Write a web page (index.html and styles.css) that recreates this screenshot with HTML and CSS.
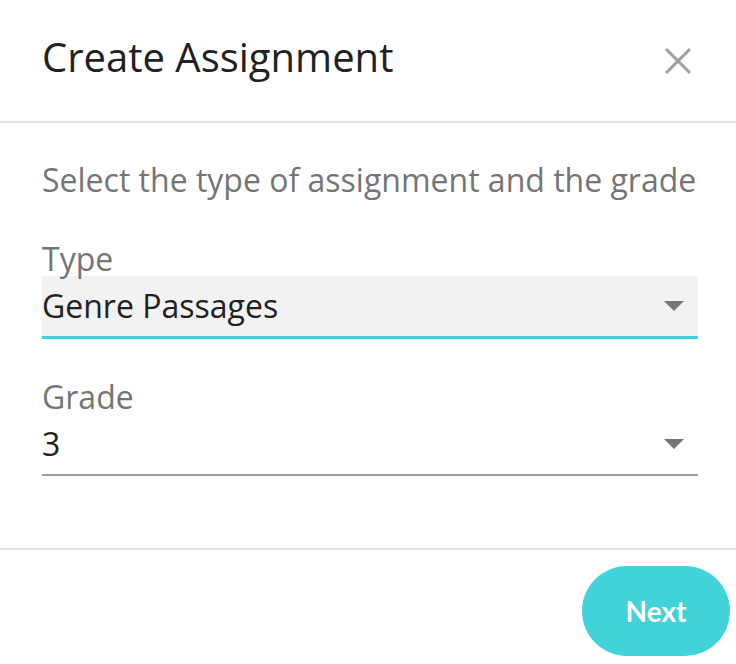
FILE: index.html
```html
<!DOCTYPE html>
<html lang="en">
<head>
    <meta charset="UTF-8">
    <meta name="viewport" content="width=device-width, initial-scale=1.0">
    <title>Create Assignment</title>
    <link rel="stylesheet" href="styles.css">
</head>
<body>

<div class="dialog">
    <div class="dialog-header">
        <h1>Create Assignment</h1>
        <button class="close-btn" aria-label="Close">
            <svg width="28" height="28" viewBox="0 0 28 28">
                <path d="M2 2 L26 26 M26 2 L2 26" stroke="#9e9e9e" stroke-width="3" fill="none"/>
            </svg>
        </button>
    </div>

    <div class="dialog-body">
        <p class="intro">Select the type of assignment and the grade</p>

        <!-- Type select -->
        <div class="field">
            <label class="field-label">Type</label>
            <div class="select-box active">
                <span class="select-value">Genre Passages</span>
                <span class="caret"></span>
            </div>
        </div>

        <!-- Grade select -->
        <div class="field">
            <label class="field-label">Grade</label>
            <div class="select-box">
                <span class="select-value">3</span>
                <span class="caret"></span>
            </div>
        </div>
    </div>

    <div class="dialog-footer">
        <button class="next-btn">Next</button>
    </div>
</div>

</body>
</html>
```

FILE: styles.css
```css
* {
    margin: 0;
    padding: 0;
    box-sizing: border-box;
}

body {
    font-family: 'Open Sans', sans-serif;
    background: #fff;
    width: 736px;
    height: 664px;
    overflow: hidden;
}

.dialog {
    display: flex;
    flex-direction: column;
    height: 664px;
}

.dialog-header {
    display: flex;
    justify-content: space-between;
    align-items: flex-start;
    height: 123px;
    padding: 37px 44px 0 42px;
    border-bottom: 2px solid #e0e0e0;
}

h1 {
    font-size: 40px;
    font-weight: 400;
    line-height: 40px;
    color: #212121;
}

.close-btn {
    background: none;
    border: none;
    margin-top: 10px;
    width: 28px;
    height: 28px;
    cursor: pointer;
}

.close-btn svg {
    display: block;
}

.dialog-body {
    flex: 1;
    padding: 37px 38px 0 42px;
}

.intro {
    font-size: 32px;
    line-height: 40px;
    color: #757575;
    margin-bottom: 42px;
}

.field {
    margin-bottom: 41px;
}

.field-label {
    display: block;
    font-size: 32px;
    line-height: 34px;
    color: #757575;
}

.select-box {
    display: flex;
    justify-content: space-between;
    align-items: center;
    height: 62px;
    padding: 0 14px 0 0;
    border-bottom: 2px solid #9e9e9e;
}

.select-box.active {
    background: #f2f2f2;
    height: 63px;
    border-bottom: 3px solid #41d3d9;
}

.select-value {
    font-size: 32px;
    line-height: 40px;
    color: #212121;
}

.caret {
    width: 0;
    height: 0;
    border-left: 10px solid transparent;
    border-right: 10px solid transparent;
    border-top: 10px solid #757575;
}

.dialog-footer {
    display: flex;
    justify-content: flex-end;
    height: 116px;
    padding: 16px 6px 0 0;
    border-top: 2px solid #e0e0e0;
}

.next-btn {
    width: 148px;
    height: 90px;
    border: none;
    border-radius: 45px;
    background: #41d3d9;
    color: #fff;
    font-family: 'Lato', sans-serif;
    font-weight: 700;
    font-size: 28px;
    cursor: pointer;
}
```
